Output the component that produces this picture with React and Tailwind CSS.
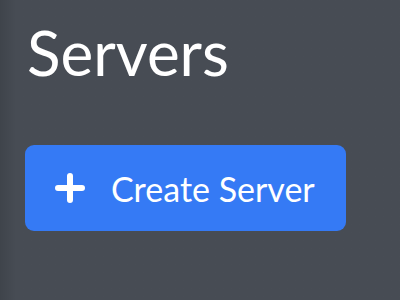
import React from 'react';

const PlusIcon = () => (
    <svg width="32" height="32" viewBox="0 0 32 32" fill="none" stroke="currentColor" strokeWidth="6" strokeLinecap="round">
        <path d="M16 4v24M4 16h24" />
    </svg>
)

const App = () => {
    return (
        <div className="w-[400px] h-[300px] overflow-hidden bg-[#474c54] bg-gradient-to-r from-[#3f444b] from-0% via-[#474c54] via-[4%] to-[#474c54] text-white" style={{fontFamily: "Lato, 'Noto Sans', sans-serif"}}>
            <div className="pl-[27px] pt-[16px]">
                <h1 className="text-[62px] leading-[72px] font-normal">Servers</h1>
                <button className="mt-[57px] w-[321px] h-[86px] rounded-[9px] bg-[#357af5] flex items-center pl-[29px] gap-[25px] text-[34px] -ml-[2px]">
                    <PlusIcon />
                    <span>Create Server</span>
                </button>
            </div>
        </div>
    )
}

export default App;
